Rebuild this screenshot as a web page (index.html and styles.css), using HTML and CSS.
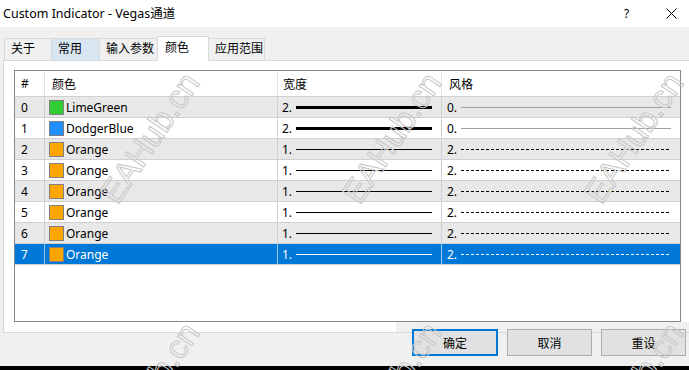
FILE: index.html
```html
<!doctype html>
<html>
<head>
<meta charset="UTF-8">
<title>Custom Indicator - Vegas通道</title>
<link rel="stylesheet" href="styles.css">
</head>
<body>
<div class="titlebar">
  <span class="title">Custom Indicator - Vegas通道</span>
  <span class="help">?</span>
  <svg class="close" width="11" height="11" viewBox="0 0 11 11"><path d="M0.5 0.5 L10.5 10.5 M10.5 0.5 L0.5 10.5" stroke="#000" stroke-width="1" fill="none"/></svg>
</div>

<div class="tabstrip">
  <div class="tab t1">关于</div>
  <div class="tab t2 hover">常用</div>
  <div class="tab t3">输入参数</div>
  <div class="tab t4 active">颜色</div>
  <div class="tab t5">应用范围</div>
</div>

<div class="panel">
  <div class="list">
    <div class="row head">
      <div class="cell c-num">#</div>
      <div class="cell c-color">颜色</div>
      <div class="cell c-width">宽度</div>
      <div class="cell c-style">风格</div>
    </div>
    <div class="row alt">
      <div class="cell c-num">0</div>
      <div class="cell c-color"><span class="swatch lime"></span>LimeGreen</div>
      <div class="cell c-width">2.<span class="ln w2"></span></div>
      <div class="cell c-style">0.<span class="ln solid"></span></div>
    </div>
    <div class="row">
      <div class="cell c-num">1</div>
      <div class="cell c-color"><span class="swatch blue"></span>DodgerBlue</div>
      <div class="cell c-width">2.<span class="ln w2"></span></div>
      <div class="cell c-style">0.<span class="ln solid"></span></div>
    </div>
    <div class="row alt">
      <div class="cell c-num">2</div>
      <div class="cell c-color"><span class="swatch orange"></span>Orange</div>
      <div class="cell c-width">1.<span class="ln w1"></span></div>
      <div class="cell c-style">2.<span class="ln dot"></span></div>
    </div>
    <div class="row">
      <div class="cell c-num">3</div>
      <div class="cell c-color"><span class="swatch orange"></span>Orange</div>
      <div class="cell c-width">1.<span class="ln w1"></span></div>
      <div class="cell c-style">2.<span class="ln dot"></span></div>
    </div>
    <div class="row alt">
      <div class="cell c-num">4</div>
      <div class="cell c-color"><span class="swatch orange"></span>Orange</div>
      <div class="cell c-width">1.<span class="ln w1"></span></div>
      <div class="cell c-style">2.<span class="ln dot"></span></div>
    </div>
    <div class="row">
      <div class="cell c-num">5</div>
      <div class="cell c-color"><span class="swatch orange"></span>Orange</div>
      <div class="cell c-width">1.<span class="ln w1"></span></div>
      <div class="cell c-style">2.<span class="ln dot"></span></div>
    </div>
    <div class="row alt">
      <div class="cell c-num">6</div>
      <div class="cell c-color"><span class="swatch orange"></span>Orange</div>
      <div class="cell c-width">1.<span class="ln w1"></span></div>
      <div class="cell c-style">2.<span class="ln dot"></span></div>
    </div>
    <div class="row selected">
      <div class="cell c-num">7</div>
      <div class="cell c-color"><span class="swatch orange"></span>Orange</div>
      <div class="cell c-width">1.<span class="ln w1"></span></div>
      <div class="cell c-style">2.<span class="ln dot"></span></div>
    </div>
  </div>
</div>

<div class="buttons">
  <div class="btn default">确定</div>
  <div class="btn">取消</div>
  <div class="btn">重设</div>
</div>

<div class="taskbar"></div>

<!-- watermark over the whole window -->
<div class="wm-layer">
  <span class="wm wm1">EAHub.cn</span>
  <span class="wm wm2">EAHub.cn</span>
  <span class="wm wm3">EAHub.cn</span>
  <span class="wm wm4">EAHub.cn</span>
  <span class="wm wm5">EAHub.cn</span>
  <span class="wm wm6">EAHub.cn</span>
</div>
</body>
</html>
```

FILE: styles.css
```css
html, body { margin: 0; padding: 0; }
body { position: relative; width: 689px; height: 370px; overflow: hidden; background: #f0f0f0; font-family: "Noto Sans", "Noto Sans CJK SC", sans-serif; font-size: 12px; color: #000; }

.titlebar { height: 27px; background: #fff; display: flex; align-items: center; padding-left: 3px; }
.title { flex: 1; font-size: 12.5px; line-height: 16px; }
.help { width: 12px; margin-right: 30px; font-size: 12px; }
.close { margin-right: 12px; }

.tabstrip { height: 33px; display: flex; align-items: flex-end; padding-left: 4px; }
.tab { box-sizing: border-box; height: 22px; line-height: 20px; padding-left: 6px; border: 1px solid #d9d9d9; border-bottom: none; background: #f0f0f0; margin-left: -1px; }
.tab:first-child { margin-left: 0; }
.t1 { width: 48px; }
.t2 { width: 49px; }
.t3 { width: 59px; }
.t4 { width: 52px; }
.t5 { width: 57px; }
.tab.hover { background: #d8e6f2; }
.tab.active { height: 25px; margin-bottom: -1px; background: #fff; position: relative; z-index: 1; padding-left: 7px; line-height: 21px; }

.panel { box-sizing: border-box; width: 700px; height: 273px; margin-left: 3px; border: 1px solid #d9d9d9; background: #fff; padding: 9px 0 0 10px; }
.list { box-sizing: border-box; width: 667px; height: 252px; border: 1px solid #828790; background: #fff; }

.row { display: flex; height: 21px; border-bottom: 1px solid #d0d0d0; box-sizing: border-box; }
.row.alt { background: #e8e8e8; }
.row.head { height: 26px; }
.row.selected { background: #0078d7; color: #fff; }

.cell { box-sizing: border-box; display: flex; align-items: center; border-right: 1px solid #d0d0d0; white-space: nowrap; }
.head .cell { border-right-color: #e5e5e5; }
.selected .cell { border-right-color: #9cc8ee; }
.c-num { width: 30px; padding-left: 6px; }
.c-color { width: 233px; padding-left: 4px; }
.head .c-color { padding-left: 7px; }
.c-width { width: 164px; padding-left: 4px; }
.head .c-width { padding-left: 5px; }
.c-style { width: 238px; padding-left: 5px; border-right: none; }
.head .c-style { padding-left: 7px; }

.swatch { box-sizing: border-box; width: 15px; height: 15px; border: 1px solid #808080; margin-right: 2px; }
.lime { background: #32cd32; }
.blue { background: #1e90ff; }
.orange { background: #ffa500; }

.ln { flex: 1; margin-left: 4px; margin-right: 9px; }
.w2 { height: 3px; background: #000; }
.w1 { height: 1px; background: #000; }
.solid { height: 1px; background: #a0a0a0; }
.dot { height: 1px; background: repeating-linear-gradient(to right, #000 0, #000 3px, transparent 3px, transparent 5px); }
.selected .w1 { background: #fff; }
.selected .dot { background: repeating-linear-gradient(to right, #fff 0, #fff 3px, transparent 3px, transparent 5px); }

.buttons { position: relative; z-index: 1; margin-top: -11px; margin-left: 396px; height: 44px; display: flex; justify-content: flex-end; align-items: flex-start; gap: 9px; padding: 7px 3px 0 0; box-sizing: border-box; background: linear-gradient(to bottom, #f0f0f0 10px, #d9d9d9 10px, #d9d9d9 11px, #f0f0f0 11px); }
.btn { box-sizing: border-box; width: 85px; height: 27px; border: 1px solid #adadad; background: #e1e1e1; display: flex; align-items: center; justify-content: center; }
.btn.default { width: 86px; border: 2px solid #0078d7; }

.taskbar { height: 4px; background: #000; }

.wm-layer { position: absolute; left: 0; top: 27px; right: 0; bottom: 0; overflow: hidden; z-index: 2; pointer-events: none; }
.wm { position: absolute; font-family: "Liberation Sans", sans-serif; font-size: 33px; color: transparent; -webkit-text-stroke: 1px #c8c8c8; transform: translate(-50%, -50%) rotate(-56deg); white-space: nowrap; }
.wm1 { left: 150px; top: 111px; }
.wm2 { left: 392px; top: 111px; }
.wm3 { left: 634px; top: 111px; }
.wm4 { left: 150px; top: 361px; }
.wm5 { left: 392px; top: 361px; }
.wm6 { left: 634px; top: 361px; }
```
